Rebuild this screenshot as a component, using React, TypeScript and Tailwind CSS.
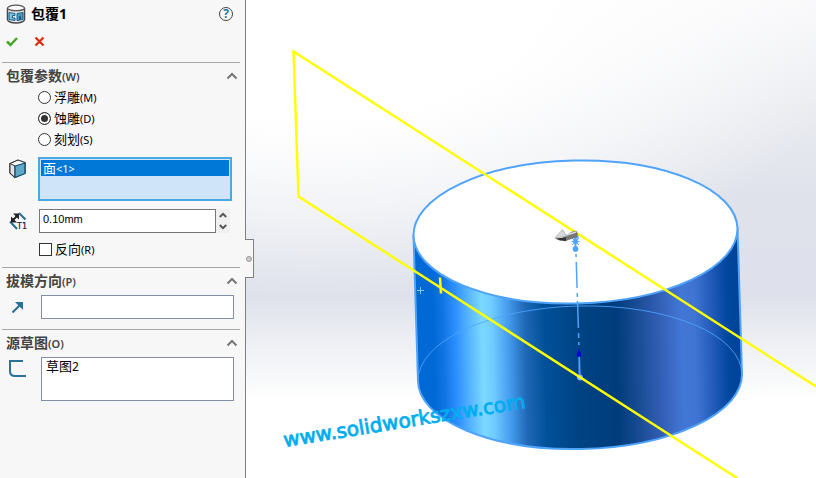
import { useState } from "react";
import type { ReactNode } from "react";

const WRAP_TYPES = [
	{ id: "emboss", name: "浮雕", hotkey: "(M)" },
	{ id: "deboss", name: "蚀雕", hotkey: "(D)" },
	{ id: "scribe", name: "刻划", hotkey: "(S)" },
];

function WrapIcon() {
	return (
		<svg className="h-5 w-5" viewBox="0 0 20 20" aria-hidden="true">
			<path
				d="M1.500 4v11.500c0 2 3.800 3.500 8.500 3.500s8.500-1.500 8.500-3.500V4"
				fill="#e9e9e9"
				stroke="#484848"
				strokeWidth="1.500"
			/>
			<ellipse cx="10" cy="4" rx="8.500" ry="2.800" fill="#fff" stroke="#555" strokeWidth="1.300" />
			<path d="M3 8.500l6 1v2h-2.500v2.500h2.500v2.500l-6-1z" fill="#7cc4df" stroke="#19618a" />
			<path d="M11 9.500l6-1v7l-2.500.5v-4h-1v4.300l-2.500.200z" fill="#4a9ec2" stroke="#19618a" />
		</svg>
	);
}

function FaceIcon() {
	return (
		<svg className="h-5 w-5" viewBox="0 0 20 20" aria-hidden="true">
			<path d="M2 4.500L10 1l7 2.500v10.500L7 18.500 2 14z" fill="#fff" stroke="#333" strokeWidth="1.300" strokeLinejoin="round" />
			<path d="M2 4.500l5 2.500v11.500L2 14z" fill="#e4e4e4" stroke="#333" strokeLinejoin="round" />
			<path d="M7 7l10-3v10.500L7 18.500z" fill="#5ea9c8" stroke="#174c68" strokeWidth="1.300" strokeLinejoin="round" />
		</svg>
	);
}

function ThicknessIcon() {
	return (
		<svg className="h-5 w-5" viewBox="0 0 20 20" aria-hidden="true">
			<path d="M11 2l6.500 6.500M2 10.500l7 7.500" stroke="#246f96" strokeWidth="2" />
			<path d="M4 10l6-6" stroke="#222" strokeWidth="2" />
			<path d="M5 2.500h6V8.500zM3 5.500V11.500h6z" fill="#222" />
			<text x="9" y="18" fontSize="8" fill="#222" stroke="#222" strokeWidth="0.200" className="font-['DejaVu_Sans',sans-serif]">
				T1
			</text>
		</svg>
	);
}

function DirectionIcon() {
	return (
		<svg className="h-5 w-5" viewBox="0 0 20 20" aria-hidden="true">
			<path d="M6.500 15.500l7-7" stroke="#2a7196" strokeWidth="2.200" />
			<path d="M9 5h8v8z" fill="#2a7196" />
		</svg>
	);
}

function SketchIcon() {
	return (
		<svg className="h-5 w-5" viewBox="0 0 20 20" aria-hidden="true">
			<path d="M17 2H4v10q0 5 5 5h12" fill="none" stroke="#2a7196" strokeWidth="2" />
		</svg>
	);
}

function Chevron({ down = false }: { down?: boolean }) {
	return (
		<svg className={down ? "h-3 w-3 rotate-180" : "h-3 w-3"} viewBox="0 0 12 12" aria-hidden="true">
			<path d="M1.500 8.500L6 4l4.500 4.500" fill="none" stroke="currentColor" strokeWidth="2" />
		</svg>
	);
}

function SpinArrow({ down = false }: { down?: boolean }) {
	return (
		<svg className={down ? "h-2 w-2 rotate-180" : "h-2 w-2"} viewBox="0 0 8 8" aria-hidden="true">
			<path d="M.800 6L4 2.800 7.200 6" fill="none" stroke="currentColor" strokeWidth="2" />
		</svg>
	);
}

function Section({ title, hotkey, children }: { title: string; hotkey: string; children: ReactNode }) {
	const [open, setOpen] = useState(true);

	return (
		<section className="ml-0.5 mr-[5px] border-t border-[#a8a8a8] pb-2.5">
			<h2>
				<button
					type="button"
					aria-expanded={open}
					onClick={() => setOpen(!open)}
					className="flex h-6 w-full items-center pl-1 pr-0.5 pt-0.5 text-[#444]"
				>
					<span className="text-[14px] font-bold">{title}</span>
					<span className="text-[11px] font-semibold">{hotkey}</span>
					<span className="ml-auto text-[#777]">
						<Chevron />
					</span>
				</button>
			</h2>
			{open && children}
		</section>
	);
}

function PropertyPanel() {
	const [wrapType, setWrapType] = useState("deboss");
	const [thickness, setThickness] = useState("0.10mm");
	const [reverse, setReverse] = useState(false);

	const step = (delta: number) => {
		const value = Math.max(0, (parseFloat(thickness) || 0) + delta);
		setThickness(`${value.toFixed(2)}mm`);
	};

	return (
		<aside className="relative z-10 w-[246px] shrink-0 border-r border-[#808080] bg-[#f7f7f7]">
			<header className="flex h-7 items-center pl-1.5 pr-3">
				<WrapIcon />
				<h1 className="ml-[5px] text-[14px] font-bold">包覆1</h1>
				<button
					type="button"
					aria-label="Help"
					className="ml-auto flex h-3.5 w-3.5 items-center justify-center rounded-full border border-[#444] font-['Open_Sans',sans-serif] text-[12px] font-bold leading-none text-[#2878a0]"
				>
					?
				</button>
			</header>
			<div className="mb-1.5 flex h-7 items-center gap-4 pl-1.5">
				<button type="button" aria-label="OK">
					<svg className="h-3 w-3" viewBox="0 0 12 12">
						<path d="M1 5.500L4.500 9 11 2" fill="none" stroke="#47a528" strokeWidth="2.500" />
					</svg>
				</button>
				<button type="button" aria-label="Cancel">
					<svg className="h-3 w-3" viewBox="0 0 12 12">
						<path d="M1.500 1.500l8 8M9.500 1.500l-8 8" stroke="#dc2b0b" strokeWidth="2.200" />
					</svg>
				</button>
			</div>

			<Section title="包覆参数" hotkey="(W)">
				<fieldset className="pl-9">
					{WRAP_TYPES.map((type) => (
						<label key={type.id} className="flex h-[21px] items-center">
							<input
								type="radio"
								name="wrap-type"
								checked={wrapType === type.id}
								onChange={() => setWrapType(type.id)}
								className="mr-[3px] h-[13px] w-[13px] appearance-none rounded-full border border-[#333] bg-white checked:bg-[#333] checked:shadow-[inset_0_0_0_2px_white]"
							/>
							<span className="text-[13px]">{type.name}</span>
							<span className="text-[11px]">{type.hotkey}</span>
						</label>
					))}
				</fieldset>
				<div className="mt-[7px] flex items-start pl-1.5 pr-2">
					<span className="mr-2.5 mt-0.5">
						<FaceIcon />
					</span>
					<ul
						role="listbox"
						aria-label="Wrap face"
						className="h-11 flex-1 border-2 border-[#4aa8e2] bg-[#cfe4f8] p-px"
					>
						<li role="option" aria-selected="true" className="flex h-4 items-center bg-[#0078d7] pl-0.5 text-white">
							<span className="text-[13px]">面</span>
							<span className="text-[11px]">&lt;1&gt;</span>
						</li>
					</ul>
				</div>
				<div className="mt-2 flex items-center pl-1.5 pr-2.5">
					<span className="mr-[11px]">
						<ThicknessIcon />
					</span>
					<input
						type="text"
						aria-label="Thickness"
						value={thickness}
						onChange={(e) => setThickness(e.target.value)}
						className="h-6 min-w-0 flex-1 border border-[#777] bg-white px-[3px] pb-1 font-['Liberation_Sans',sans-serif] text-[11px] outline-none"
					/>
					<div className="flex flex-col bg-[#f0f0f0] text-[#555]">
						<button type="button" aria-label="Increase" onClick={() => step(0.01)} className="flex h-3 w-3.5 items-center justify-center">
							<SpinArrow />
						</button>
						<button type="button" aria-label="Decrease" onClick={() => step(-0.01)} className="flex h-3 w-3.5 items-center justify-center">
							<SpinArrow down />
						</button>
					</div>
				</div>
				<label className="mt-2 flex h-4 items-center pl-[37px]">
					<input
						type="checkbox"
						checked={reverse}
						onChange={(e) => setReverse(e.target.checked)}
						className="mr-[3px] h-[13px] w-[13px] appearance-none border border-[#333] bg-white checked:bg-[#333]"
					/>
					<span className="text-[13px]">反向</span>
					<span className="text-[11px]">(R)</span>
				</label>
			</Section>

			<Section title="拔模方向" hotkey="(P)">
				<div className="mt-[3px] flex items-center pl-1 pr-1.5">
					<span className="mr-[15px]">
						<DirectionIcon />
					</span>
					<input
						type="text"
						aria-label="Pull direction"
						className="h-6 min-w-0 flex-1 border border-[#858ca3] bg-white px-1 text-[12px] outline-none"
					/>
				</div>
			</Section>

			<Section title="源草图" hotkey="(O)">
				<div className="mt-[3px] flex items-start pl-1 pr-1.5">
					<span className="mr-[15px] mt-0.5">
						<SketchIcon />
					</span>
					<ul role="listbox" aria-label="Source sketch" className="h-11 flex-1 border border-[#858ca3] bg-white pl-1">
						<li role="option" aria-selected="false" className="flex h-[17px] items-center">
							<span className="text-[13px]">草图</span>
							<span className="text-[12px]">2</span>
						</li>
					</ul>
				</div>
			</Section>

			{/* splitter handle, hangs over the viewport */}
			<div className="absolute left-full top-[239px] flex h-[39px] w-[9px] items-center justify-center border-y border-r border-[#808080] bg-[#f7f7f7]">
				<span className="h-1.5 w-1.5 shrink-0 rounded-full border border-[#999] bg-[#ccc]" />
			</div>
		</aside>
	);
}

function Viewport() {
	return (
		<main className="min-w-0 flex-1 overflow-hidden bg-white">
			<svg className="block w-full" viewBox="246 0 570 478" role="img" aria-label="Wrap preview">
				<defs>
					<linearGradient id="sky" x1="0" y1="0" x2="0" y2="1">
						<stop offset="0" stopColor="#f8f8fa" />
						<stop offset="0.23" stopColor="#e9ebf0" />
						<stop offset="0.42" stopColor="#dfe2eb" />
						<stop offset="0.62" stopColor="#dee1eb" />
						<stop offset="0.72" stopColor="#eef0f4" />
						<stop offset="0.84" stopColor="#fff" />
					</linearGradient>
					<radialGradient id="glow" gradientUnits="userSpaceOnUse" cx="0" cy="0" r="1" gradientTransform="translate(310 0) scale(560 300)">
						<stop offset="0.400" stopColor="#fff" />
						<stop offset="0.700" stopColor="#fff" stopOpacity="0.600" />
						<stop offset="1" stopColor="#fff" stopOpacity="0" />
					</radialGradient>
					<linearGradient id="side" gradientUnits="userSpaceOnUse" x1="413" y1="300" x2="740" y2="292">
						<stop offset="0" stopColor="#0069d3" />
						<stop offset="0.060" stopColor="#0069d6" />
						<stop offset="0.090" stopColor="#1075e3" />
						<stop offset="0.130" stopColor="#2f91ff" />
						<stop offset="0.170" stopColor="#58b6ff" />
						<stop offset="0.210" stopColor="#7bd9ff" />
						<stop offset="0.240" stopColor="#6fcbff" />
						<stop offset="0.290" stopColor="#459bed" />
						<stop offset="0.340" stopColor="#1f68b7" />
						<stop offset="0.400" stopColor="#005099" />
						<stop offset="0.500" stopColor="#004383" />
						<stop offset="0.620" stopColor="#003c7c" />
						<stop offset="0.680" stopColor="#184b93" />
						<stop offset="0.750" stopColor="#325eb5" />
						<stop offset="0.820" stopColor="#4377d6" />
						<stop offset="0.860" stopColor="#4074d3" />
						<stop offset="0.920" stopColor="#1d57b5" />
						<stop offset="0.960" stopColor="#00479e" />
						<stop offset="1" stopColor="#004398" />
					</linearGradient>
				</defs>
				<rect x="246" width="570" height="478" fill="url(#sky)" />
				<rect x="246" width="570" height="478" fill="url(#glow)" />

				{/* cylinder */}
				<path
					d="M413.500 236L418 381A162 71.500 -1.300 0 0 742 374L737.500 228z"
					fill="url(#side)"
					stroke="#50a3fa"
					strokeWidth="2"
				/>
				<ellipse cx="575.500" cy="232" rx="162" ry="71.500" transform="rotate(-1.300 575.500 232)" fill="#fff" stroke="#50a3fa" strokeWidth="2" />
				<path d="M418 381A162 71.500 -1.300 0 1 742 374" fill="none" stroke="#50a3fa" strokeOpacity="0.850" />
				<path d="M417 290.500h7M420.500 287v7" stroke="#83c0ff" />

				{/* axis and origin */}
				<path d="M576 254L580 377" stroke="#50a3fa" strokeWidth="1.500" strokeDasharray="3 5 26 5 4 4 27 5 5 4" />
				<path d="M574.500 376h11M576 381l8-7M577 373l8 8" stroke="#0000d8" strokeOpacity="0.600" />
				<path d="M579 354v22" stroke="#5b92ff" />
				<path d="M579 348l2.500 8h-5z" fill="#0000e0" />
				<circle cx="579" cy="355" r="2" fill="#0000e0" />
				<circle cx="580" cy="377.500" r="3" fill="#74b7ff" />
				<g stroke="#50a3fa" fill="#50a3fa">
					<path d="M575.500 233v14" strokeWidth="2" />
					<path d="M572 238l7 7M579 238l-7 7M571.500 241.500h8" />
					<circle cx="575.500" cy="241.500" r="2" />
					<circle cx="575.500" cy="249" r="2.500" />
					<path d="M574 234h4v4h-4z" />
				</g>

				{/* sketch plane */}
				<path d="M816 386.500L293.500 51.500L298.500 196.500L737 478" fill="none" stroke="#ff0" strokeWidth="2.400" />
				<path d="M440 277.500l1 16" stroke="#ff0" strokeWidth="2.500" />

				{/* drag arrow */}
				<path d="M563 237l9-5 4-1 1.500 3-1 3-12 4z" fill="#777" stroke="#666" strokeWidth="0.600" />
				<path d="M565 235.500l11-3.500" stroke="#ddd" strokeWidth="1.500" />
				<path d="M555 238l7.500-8.500 2.500 4 1 3z" fill="#d9d9d9" stroke="#999" strokeWidth="0.600" />
				<path d="M555 238.500l11-1v3.500l-6-.5z" fill="#333" />

				<text
					transform="translate(284.500 447) rotate(-9.200)"
					fontSize="20"
					fill="#00adef"
					stroke="#00adef"
					strokeWidth="0.800"
					className="font-['DejaVu_Sans',sans-serif]"
				>
					www.solidworkszxw.com
				</text>
			</svg>
		</main>
	);
}

export default function App() {
	return (
		<div className="flex min-h-screen bg-white font-['Noto_Sans','Noto_Sans_CJK_SC',sans-serif] leading-none text-black">
			<PropertyPanel />
			<Viewport />
		</div>
	);
}
